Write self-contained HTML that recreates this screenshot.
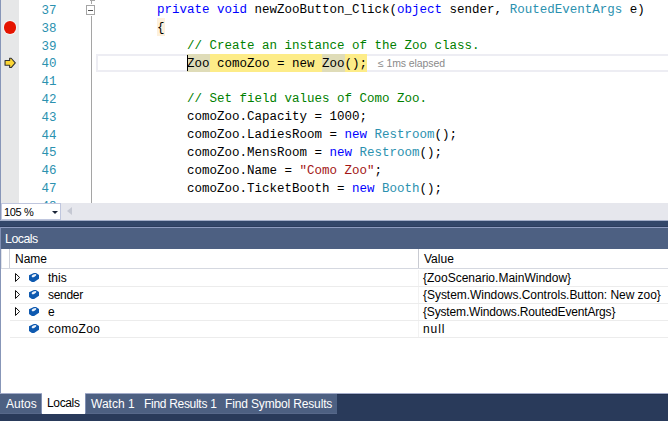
<!DOCTYPE html>
<html><head><meta charset="utf-8">
<style>
*{margin:0;padding:0;box-sizing:border-box}
html,body{width:668px;height:421px;overflow:hidden;background:#fff;position:relative}
.a{position:absolute}
.mono{font-family:"Liberation Mono",monospace;font-size:12.5px;white-space:pre}
.sans{font-family:"Liberation Sans",sans-serif;white-space:pre}
.ln{position:absolute;left:19.5px;width:37px;text-align:right;color:#2b91af;height:18px;line-height:18px}
.cl{position:absolute;left:97px;height:18px;line-height:18px;color:#000}
.k{color:#0000ff}.t{color:#2b91af}.c{color:#008000}.s{color:#a31515}
.row{position:absolute;left:0;width:668px;height:17px}
.row::after{content:'';position:absolute;left:10px;right:0;bottom:0;height:1px;background:#ececec}
.row::before{content:'';position:absolute;left:418px;top:0;width:1px;height:16px;background:#f2f2f2}
.rn{position:absolute;left:48px;top:0px;height:16px;line-height:16px;font-size:12px;color:#000}
.rv{position:absolute;left:423px;top:0px;height:16px;line-height:16px;font-size:12px;color:#000}
.ico{position:absolute;left:0;top:0}
</style></head><body>
<!-- editor -->
<div class="a" style="left:0;top:0;width:1px;height:221px;background:#8796b8"></div>
<div class="a" style="left:1px;top:0;width:18px;height:203px;background:#e6e7e8"></div>
<!-- breakpoint -->
<div class="a" style="left:3.5px;top:21px;width:12.6px;height:12.6px;border-radius:50%;background:#e51400;box-shadow:0 0 1px 1px #f4f4f4"></div>
<!-- arrow -->
<svg class="a" style="left:0;top:50px" width="19" height="26" viewBox="0 0 19 26">
<path d="M5.05 10.45 H9.65 V8.25 H11.2 L15.3 12.9 L11.2 17.55 H9.65 V15.25 H5.05 Z" fill="#fcd634" stroke="#333" stroke-width="1.1" stroke-linejoin="round"/>
</svg>
<!-- line numbers -->
<div class="a mono" style="left:0;top:0">
<div class="ln" style="top:2px">37</div>
<div class="ln" style="top:20px">38</div>
<div class="ln" style="top:38px">39</div>
<div class="ln" style="top:55px">40</div>
<div class="ln" style="top:73px">41</div>
<div class="ln" style="top:91px">42</div>
<div class="ln" style="top:109px">43</div>
<div class="ln" style="top:127px">44</div>
<div class="ln" style="top:144px">45</div>
<div class="ln" style="top:162px">46</div>
<div class="ln" style="top:180px">47</div>
<div class="ln" style="top:198px">48</div>
</div>
<!-- fold margin -->
<div class="a" style="left:91px;top:0;width:1px;height:4px;background:#a5a5a5"></div>
<div class="a" style="left:90px;top:0;width:5px;height:1px;background:#a5a5a5"></div>
<div class="a" style="left:86px;top:5px;width:9px;height:10px;border:1px solid #a5a5a5;background:#fff"></div>
<div class="a" style="left:88px;top:10px;width:5px;height:1px;background:#505050"></div>
<div class="a" style="left:91px;top:16px;width:1px;height:187px;background:#a5a5a5"></div>
<!-- current line box -->
<div class="a" style="left:96px;top:54px;width:580px;height:18px;border:2px solid #ededf3"></div>
<!-- brace highlight -->
<div class="a" style="left:157px;top:18px;width:8px;height:18px;background:#fdf0dc"></div>
<!-- current statement -->
<div class="a" style="left:187px;top:54px;width:180px;height:18px;background:#fdec88"></div>
<div class="a" style="left:187px;top:54px;width:22.5px;height:18px;background:#dfdcb8"></div>
<div class="a" style="left:322px;top:54px;width:22.5px;height:18px;background:#dfdcb8"></div>
<div class="a" style="left:187px;top:55px;width:1px;height:16px;background:#000"></div>
<!-- code -->
<div class="a mono" style="left:0;top:0">
<div class="cl" style="top:1px">        <span class="k">private</span> <span class="k">void</span> newZooButton_Click(<span class="k">object</span> sender, <span class="t">RoutedEventArgs</span> e)</div>
<div class="cl" style="top:19px">        {</div>
<div class="cl" style="top:37px">            <span class="c">// Create an instance of the Zoo class.</span></div>
<div class="cl" style="top:55px">            Zoo comoZoo = new Zoo();</div>
<div class="cl" style="top:90px">            <span class="c">// Set field values of Como Zoo.</span></div>
<div class="cl" style="top:108px">            comoZoo.Capacity = 1000;</div>
<div class="cl" style="top:126px">            comoZoo.LadiesRoom = <span class="k">new</span> <span class="t">Restroom</span>();</div>
<div class="cl" style="top:144px">            comoZoo.MensRoom = <span class="k">new</span> <span class="t">Restroom</span>();</div>
<div class="cl" style="top:162px">            comoZoo.Name = <span class="s">"Como Zoo"</span>;</div>
<div class="cl" style="top:180px">            comoZoo.TicketBooth = <span class="k">new</span> <span class="t">Booth</span>();</div>
</div>
<div class="a sans" style="left:378px;top:56px;font-size:10.5px;line-height:14px;color:#8a8a8a;letter-spacing:-0.1px">≤ 1ms elapsed</div>
<!-- hscroll bar -->
<div class="a" style="left:1px;top:203px;width:667px;height:18px;background:#e6e7ed"></div>
<div class="a" style="left:1px;top:203px;width:60px;height:17px;border:1px solid #bfc6de;background:#fff"></div>
<div class="a sans" style="left:4px;top:205px;font-size:11px;line-height:14px;color:#000;letter-spacing:-0.35px">105 %</div>
<div class="a" style="left:51.7px;top:210.8px;width:0;height:0;border-left:3.25px solid transparent;border-right:3.25px solid transparent;border-top:3.2px solid #1b2538"></div>
<div class="a" style="left:67px;top:206.6px;width:0;height:0;border-top:4.6px solid transparent;border-bottom:4.6px solid transparent;border-right:5px solid #c5c8d3"></div>
<!-- separator -->
<div class="a" style="left:0;top:220px;width:668px;height:1px;background:#a3aec9"></div>
<div class="a" style="left:0;top:221px;width:668px;height:6px;background:#33476a;border-bottom:1px solid #2c3d5e"></div>
<!-- locals title -->
<div class="a" style="left:0;top:227px;width:668px;height:22px;background:#4d6082;border-top:1px solid #8d9bbf;border-left:1px solid #7f8eb3"></div>
<div class="a sans" style="left:5px;top:230.5px;font-size:12.4px;line-height:16px;color:#fff;letter-spacing:-0.5px">Locals</div>
<!-- locals body -->
<div class="a" style="left:0;top:249px;width:1px;height:144px;background:#8796b8"></div>
<div class="a" style="left:9px;top:249px;width:1px;height:19px;background:#cdd0d8"></div>
<div class="a" style="left:1px;top:249px;width:1px;height:19px;background:#e2e4ea"></div>
<div class="a" style="left:418px;top:249px;width:1px;height:19px;background:#c9cbd2"></div>
<div class="a" style="left:1px;top:268px;width:667px;height:1px;background:#d5d8e0"></div>
<div class="a sans" style="left:15px;top:251px;font-size:12px;line-height:16px;color:#000">Name</div>
<div class="a sans" style="left:424px;top:251px;font-size:12px;line-height:16px;color:#000">Value</div>

<div class="a sans" style="left:0;top:0">
<div class="row" style="top:270px"><svg class="ico" width="45" height="17"><path d="M15.5 3.5 L19.6 7.5 L15.5 11.5 Z" fill="#fff" stroke="#111" stroke-width="1"/><path d="M29 5.3 L33.8 3 L36 3 L39 5 L39 8.7 L34.1 12 L31.9 12 L29 10 Z" fill="#0f5ab0"/><ellipse cx="34" cy="5.6" rx="2.5" ry="1.25" transform="rotate(-25 34 5.6)" fill="#eef3fa"/></svg><div class="rn">this</div><div class="rv">{ZooScenario.MainWindow}</div></div>
<div class="row" style="top:287px"><svg class="ico" width="45" height="17"><path d="M15.5 3.5 L19.6 7.5 L15.5 11.5 Z" fill="#fff" stroke="#111" stroke-width="1"/><path d="M29 5.3 L33.8 3 L36 3 L39 5 L39 8.7 L34.1 12 L31.9 12 L29 10 Z" fill="#0f5ab0"/><ellipse cx="34" cy="5.6" rx="2.5" ry="1.25" transform="rotate(-25 34 5.6)" fill="#eef3fa"/></svg><div class="rn" style="letter-spacing:-0.3px">sender</div><div class="rv" style="letter-spacing:-0.04px">{System.Windows.Controls.Button: New zoo}</div></div>
<div class="row" style="top:304px"><svg class="ico" width="45" height="17"><path d="M15.5 3.5 L19.6 7.5 L15.5 11.5 Z" fill="#fff" stroke="#111" stroke-width="1"/><path d="M29 5.3 L33.8 3 L36 3 L39 5 L39 8.7 L34.1 12 L31.9 12 L29 10 Z" fill="#0f5ab0"/><ellipse cx="34" cy="5.6" rx="2.5" ry="1.25" transform="rotate(-25 34 5.6)" fill="#eef3fa"/></svg><div class="rn">e</div><div class="rv" style="letter-spacing:-0.16px">{System.Windows.RoutedEventArgs}</div></div>
<div class="row" style="top:321px"><svg class="ico" width="45" height="17"><path d="M29 5.3 L33.8 3 L36 3 L39 5 L39 8.7 L34.1 12 L31.9 12 L29 10 Z" fill="#0f5ab0"/><ellipse cx="34" cy="5.6" rx="2.5" ry="1.25" transform="rotate(-25 34 5.6)" fill="#eef3fa"/></svg><div class="rn" style="letter-spacing:0.3px">comoZoo</div><div class="rv" style="letter-spacing:0.9px">null</div></div>
</div>
<!-- tabs -->
<div class="a" style="left:0;top:393px;width:668px;height:28px;background:#293a5a;border-top:1px solid #a3acca"></div>
<div class="a" style="left:337px;top:394px;width:331px;height:1px;background:#243250"></div>
<div class="a" style="left:0;top:394px;width:42px;height:20px;background:#4d6082;border-right:1px solid #8190b3;border-bottom:1px solid #57688a"></div>
<div class="a" style="left:85px;top:394px;width:252px;height:20px;background:#4d6082;border-left:1px solid #8190b3;border-bottom:1px solid #57688a"></div>
<div class="a" style="left:42px;top:392px;width:43px;height:22px;background:#fff"></div>
<div class="a sans" style="left:6px;top:396px;font-size:12px;line-height:16px;color:#fff">Autos</div>
<div class="a sans" style="left:47px;top:395px;font-size:12px;line-height:16px;color:#000;letter-spacing:-0.35px">Locals</div>
<div class="a sans" style="left:91px;top:396px;font-size:12px;line-height:16px;color:#fff">Watch 1</div>
<div class="a sans" style="left:144px;top:396px;font-size:12px;line-height:16px;color:#fff;letter-spacing:-0.3px">Find Results 1</div>
<div class="a sans" style="left:225px;top:396px;font-size:12px;line-height:16px;color:#fff;letter-spacing:-0.15px">Find Symbol Results</div>
</body></html>
